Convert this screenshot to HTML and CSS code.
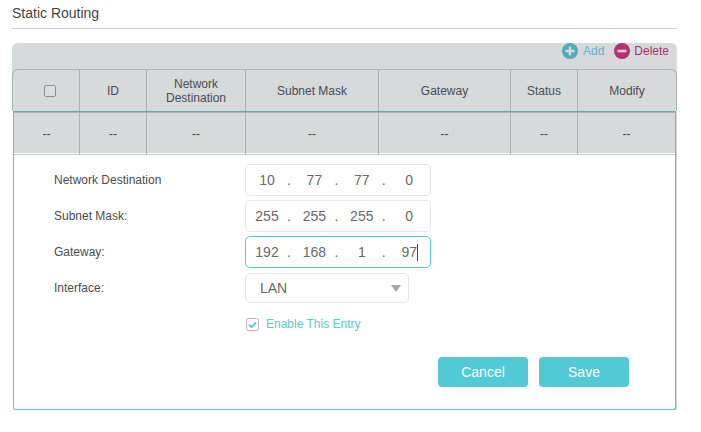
FILE: index.html
```html
<!DOCTYPE html>
<html lang="en">
<head>
<meta charset="utf-8">
<title>Static Routing</title>
<link rel="stylesheet" href="styles.css">
</head>
<body>
<main class="page">
  <h1 class="title">Static Routing</h1>
  <section class="panel">
    <div class="top">
      <div class="toolbar">
        <span class="tool tool-add">
          <svg class="tool-icon" viewBox="0 0 16 16"><circle cx="8" cy="8" r="8" fill="#4eacbc"/><path d="M8 3.5v9M3.5 8h9" stroke="#d6dadb" stroke-width="2.4"/></svg>Add
        </span>
        <span class="tool tool-del">
          <svg class="tool-icon" viewBox="0 0 16 16"><circle cx="8" cy="8" r="8" fill="#b5306c"/><path d="M3.5 8h9" stroke="#e4d5dc" stroke-width="2.6"/></svg>Delete
        </span>
      </div>
      <div class="row head">
        <div class="cell"><span class="head-check"></span></div>
        <div class="cell">ID</div>
        <div class="cell">Network<br>Destination</div>
        <div class="cell">Subnet Mask</div>
        <div class="cell">Gateway</div>
        <div class="cell">Status</div>
        <div class="cell">Modify</div>
      </div>
    </div>
    <div class="editing">
      <div class="row body-row">
        <div class="cell">--</div>
        <div class="cell">--</div>
        <div class="cell">--</div>
        <div class="cell">--</div>
        <div class="cell">--</div>
        <div class="cell">--</div>
        <div class="cell">--</div>
      </div>
      <form class="form">
        <div class="field">
          <label class="label">Network Destination</label>
          <div class="ip"><span>10</span><i>.</i><span>77</span><i>.</i><span>77</span><i>.</i><span>0</span></div>
        </div>
        <div class="field">
          <label class="label">Subnet Mask:</label>
          <div class="ip"><span>255</span><i>.</i><span>255</span><i>.</i><span>255</span><i>.</i><span>0</span></div>
        </div>
        <div class="field">
          <label class="label">Gateway:</label>
          <div class="ip ip-focus"><span>192</span><i>.</i><span>168</span><i>.</i><span>1</span><i>.</i><span class="caret">97</span></div>
        </div>
        <div class="field field-select">
          <label class="label">Interface:</label>
          <div class="select">LAN<b class="arrow"></b></div>
        </div>
        <div class="check-row">
          <svg class="check" viewBox="0 0 13 13"><rect x="0.5" y="0.5" width="12" height="12" rx="2" fill="#fff" stroke="#b4b4b4"/><path d="M3 6.6l2.5 2.5L10 4.3" fill="none" stroke="#52cad6" stroke-width="1.8"/></svg>
          <span>Enable This Entry</span>
        </div>
        <div class="actions">
          <button type="button" class="btn">Cancel</button>
          <button type="button" class="btn">Save</button>
        </div>
      </form>
    </div>
  </section>
</main>
</body>
</html>
```
FILE: styles.css
```css
* { box-sizing: border-box; }
html, body { margin: 0; background: #fff; }
body { font-family: "Liberation Sans", Arial, sans-serif; font-size: 12px; color: #4a4a52; }
.page { width: 665px; margin-left: 12px; }
.title {
  margin: 0; height: 29px; padding-top: 5px;
  font-size: 14px; line-height: 16px; font-weight: 400; color: #444;
  border-bottom: 1px solid #ccc;
}
.panel { margin-top: 14px; }
.top { background: #d6dadb; border-radius: 6px 6px 0 0; }
.toolbar { height: 26px; display: flex; justify-content: flex-end; align-items: flex-start; gap: 10px; padding: 0 8px 0 0; }
.tool { display: flex; align-items: center; gap: 5px; height: 16px; line-height: 16px; }
.tool-del { gap: 4px; }
.tool-icon { width: 16px; height: 16px; }
.tool-add { color: #5fb3c4; }
.tool-del { color: #ad2f6c; }
.row { display: grid; grid-template-columns: 66px 67px 99px 133px 132px 67px 1fr; }
.head { height: 42px; border: 1px solid #aeb1b1; border-bottom: 0; border-radius: 6px 6px 0 0; }
.cell {
  display: flex; align-items: center; justify-content: center; text-align: center;
  border-left: 1px solid #aeb1b1; line-height: 14px;
}
.cell:first-child { border-left: 0; }
.head-check { width: 12px; height: 12px; margin-left: 8px; border: 1px solid #8f8f8f; border-radius: 2px; background: #dcdede; }
.editing {
  margin: 0 1px; background: #fff;
  border: 1px solid #52cad6; border-top-color: #6fa9ad; border-radius: 0 0 3px 3px;
  box-shadow: 1px 1px 0 #d2d6d6;
}
.body-row { grid-template-columns: 65px 67px 99px 133px 132px 67px 1fr; height: 42px; background: #d6dadb; border-top: 1px solid #aeb1b1; color: #444; }
.form { border-top: 1px solid #c8cbcb; padding: 9px 0 22px 40px; box-shadow: 0 -1px 0 #fff; }
.field { display: flex; align-items: center; height: 32px; margin-bottom: 4px; }
.label { width: 191px; }
.ip {
  width: 186px; height: 32px; display: flex;
  padding-left: 1px; border: 1px solid #e6e6e6; border-radius: 5px;
  font-size: 14px; line-height: 30px; color: #6a6a6a;
}
.ip span { flex: none; width: 40px; text-align: center; }
.ip i { flex: none; width: 7.4px; font-style: normal; }
.ip-focus { border-color: #52cad6; }
.caret { position: relative; }
.caret::after { content: ""; position: absolute; left: 28px; top: 7px; width: 1px; height: 17px; background: #444; }
.field-select { margin-top: 5px; margin-bottom: 0; height: 30px; }
.select {
  width: 164px; height: 30px; line-height: 28px; padding-left: 14px; font-size: 14px; color: #6a6a6a;
  border: 1px solid #e6e6e6; border-radius: 5px; position: relative;
}
.arrow { position: absolute; right: 7px; top: 11px; width: 0; height: 0; border: 5px solid transparent; border-width: 7px 5.5px 0; border-top-color: #a8a8a8; }
.check-row { display: flex; align-items: center; gap: 7px; margin: 14px 0 0 191px; height: 14px; color: #5cc8d4; }
.check { width: 13px; height: 13px; margin-left: 1px; }
.actions { display: flex; justify-content: flex-end; gap: 11px; margin-top: 26px; padding-right: 46px; }
.btn { width: 90px; height: 30px; border: 0; border-radius: 4px; background: #52cad6; color: #fff; font: 14px "Liberation Sans", Arial, sans-serif; }
```
